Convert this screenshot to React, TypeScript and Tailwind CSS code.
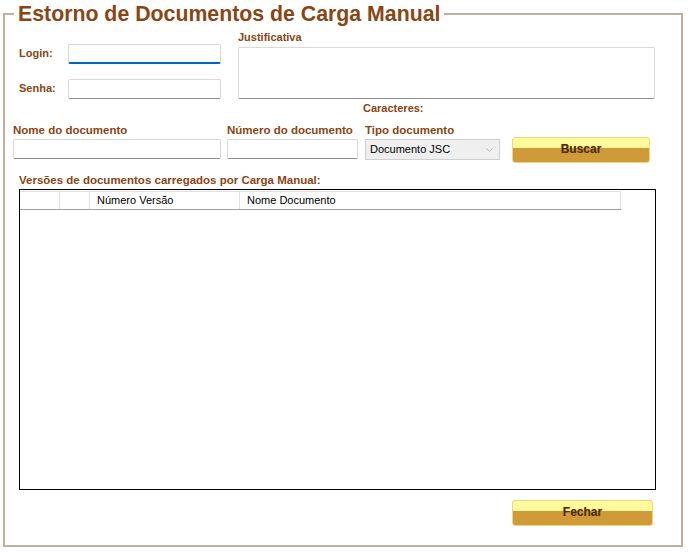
import React from "react";

const inputCls =
  "block h-[20px] border border-[#d9d9d9] border-b-[#8f8f8f] bg-white rounded-[2px] outline-none";

function GoldButton({ label, className }: { label: string; className: string }) {
  return (
    <button
      type="button"
      className={`${className} flex items-center justify-center rounded-[3px] border border-[#ecd77a] bg-[linear-gradient(#fffa9c_0%,#fffa9c_40%,#d19a39_40%,#d19a39_100%)] pb-[2px] text-[12px] font-bold text-[#4a2c00] [text-shadow:0_0_1px_#b98a30]`}
    >
      {label}
    </button>
  );
}

export default function App() {
  return (
    <div className="h-[553px] w-[689px] bg-white pt-[2px] pl-[3px] font-['Liberation_Sans',Arial,sans-serif] text-[#8b4513]">
      <fieldset className="h-[545px] w-[680px] border-2 border-[#c0b0a0]">
        <legend className="ml-[9px] px-[4px] text-[21.3px] leading-[24px] font-bold text-[#8b4513]">
          Estorno de Documentos de Carga Manual
        </legend>

        <div className="flex items-start">
          <div className="ml-[14px] flex flex-col gap-[16px] pt-[18px]">
            <div className="flex h-[19px] items-center">
              <span className="w-[49px] text-[11px] leading-[13px] font-bold">Login:</span>
              <input className={`${inputCls} h-[19px] w-[153px] border-b-2 border-b-[#0066b8]`} />
            </div>
            <div className="flex h-[19px] items-center">
              <span className="w-[49px] text-[11px] leading-[13px] font-bold">Senha:</span>
              <input type="password" className={`${inputCls} h-[19px] w-[153px]`} />
            </div>
          </div>
          <div className="ml-[17px] pt-[5px]">
            <p className="text-[11px] leading-[13px] font-bold">Justificativa</p>
            <textarea className="mt-[3px] block h-[52px] w-[417px] resize-none rounded-[2px] border border-[#d9d9d9] border-b-[#8f8f8f] outline-none" />
          </div>
        </div>

        <p className="mt-[3px] pl-[358px] text-[11px] leading-[13px] font-bold">Caracteres:</p>

        <div className="flex items-start">
          <div className="ml-[8px] w-[208px]">
            <p className="mt-[8px] text-[11.5px] leading-[14px] font-bold">Nome do documento</p>
            <input className={`${inputCls} mt-[2px] w-[208px]`} />
          </div>
          <div className="ml-[6px] w-[131px]">
            <p className="mt-[8px] text-[11.5px] leading-[14px] font-bold whitespace-nowrap">Número do documento</p>
            <input className={`${inputCls} mt-[2px] w-[131px]`} />
          </div>
          <div className="ml-[7px] w-[135px]">
            <p className="mt-[8px] text-[11.5px] leading-[14px] font-bold">Tipo documento</p>
            <div className="mt-[2px] flex h-[21px] w-[135px] items-center justify-between border border-[#d0d0d0] bg-[#efefef] pr-[6px] pl-[4px] text-[11px] text-black">
              <span>Documento JSC</span>
              <svg width="7" height="4" viewBox="0 0 7 4" className="text-[#b8b8b8]">
                <path d="M0.5 0.5 L3.5 3.5 L6.5 0.5" fill="none" stroke="currentColor" strokeWidth="1" />
              </svg>
            </div>
          </div>
          <GoldButton label="Buscar" className="mt-[22px] ml-[12px] h-[26px] w-[138px]" />
        </div>

        <p className="mt-[10px] ml-[14px] text-[11.5px] leading-[14px] font-bold">
          Versões de documentos carregados por Carga Manual:
        </p>

        <div className="mt-[2px] ml-[14px] h-[301px] w-[637px] border border-black bg-white">
          <div className="mt-[1px] flex h-[19px] w-[601px] border-b border-b-[#a0a0a0] text-[11px] text-black">
            <div className="w-[40px] border-t border-r border-[#e0e0e0]" />
            <div className="w-[30px] border-t border-r border-[#e0e0e0]" />
            <div className="flex w-[150px] items-center border-t border-r border-[#e0e0e0] pl-[7px]">Número Versão</div>
            <div className="flex w-[381px] items-center border-t border-r border-[#e0e0e0] pl-[7px]">Nome Documento</div>
          </div>
        </div>

        <GoldButton label="Fechar" className="mt-[10px] ml-[507px] h-[26px] w-[141px]" />
      </fieldset>
    </div>
  );
}
